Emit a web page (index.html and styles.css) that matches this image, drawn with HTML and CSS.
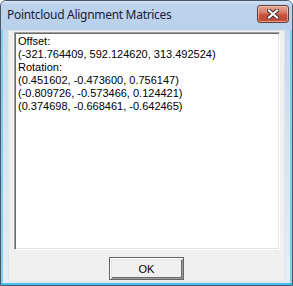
FILE: index.html
```html
<!DOCTYPE html>
<html>
<head>
<meta charset="utf-8">
<link rel="stylesheet" href="styles.css">
</head>
<body>
<div class="window">
  <div class="titlebar">
    <span class="title">Pointcloud Alignment Matrices</span>
    <div class="close">
      <svg width="12" height="10" viewBox="0 0 12 10">
        <path d="M2 1.5 L10 8.5 M10 1.5 L2 8.5" stroke="#3d2a2a" stroke-width="4" stroke-linecap="square" fill="none"/>
        <path d="M2 1.5 L10 8.5 M10 1.5 L2 8.5" stroke="#ffffff" stroke-width="2.2" stroke-linecap="square" fill="none"/>
      </svg>
    </div>
  </div>
  <div class="client">
    <div class="edit">
      <div class="line">Offset:</div>
      <div class="line">(-321.764409, 592.124620, 313.492524)</div>
      <div class="line">Rotation:</div>
      <div class="line">(0.451602, -0.473600, 0.756147)</div>
      <div class="line">(-0.809726, -0.573466, 0.124421)</div>
      <div class="line">(0.374698, -0.668461, -0.642465)</div>
    </div>
    <div class="actions">
      <button class="ok">OK</button>
    </div>
  </div>
</div>
</body>
</html>
```

FILE: styles.css
```css
html, body {
  margin: 0;
  padding: 0;
  background: #ffffff;
}
.window {
  box-sizing: border-box;
  width: 293px;
  height: 286px;
  border: 1px solid #4a5868;
  border-radius: 6px 6px 0 0;
  padding: 0 7px 3px 7px;
  background: linear-gradient(to bottom, #bcd3ec 0px, #c4d8ef 30px, #d6e3f2 140px, #e6edf6 286px);
  box-shadow: inset 0 -2px 0 0 #44c2ee, inset 2px 0 0 0 #7fd0f0, inset -2px 0 0 0 #7fd0f0;
  display: flex;
  flex-direction: column;
}
.titlebar {
  height: 29px;
  margin: 0 -7px;
  padding: 0 3px 0 6px;
  display: flex;
  align-items: flex-start;
  justify-content: space-between;
  background: linear-gradient(to bottom, #d2e2f4 0px, #bdd3ec 4px, #bad1eb 29px);
  border-radius: 5px 5px 0 0;
}
.title {
  font-family: "Noto Sans", "Open Sans", sans-serif;
  font-size: 12px;
  letter-spacing: -0.3px;
  color: #1a1a3a;
  margin-top: 6px;
  line-height: 16px;
}
.close {
  margin-top: 4px;
  box-sizing: border-box;
  width: 32px;
  height: 18px;
  border: 1px solid #6a3a35;
  border-radius: 3px;
  background: linear-gradient(to bottom, #e4a193 0px, #d9806e 6px, #c7503c 9px, #c14a36 14px, #d0705a 18px);
  box-shadow: inset 0 0 0 1px rgba(255, 220, 210, 0.5);
  display: flex;
  align-items: center;
  justify-content: center;
}
.close svg {
  display: block;
}
.client {
  flex: 1;
  background: #f0f0f0;
  box-shadow: inset 0 0 0 1px #dfe4ea;
  display: flex;
  flex-direction: column;
  padding: 2px 5px 0 6px;
}
.edit {
  box-sizing: border-box;
  height: 218px;
  background: #ffffff;
  border-top: 1px solid #a0a0a0;
  border-left: 1px solid #a0a0a0;
  border-right: 1px solid #ffffff;
  border-bottom: 1px solid #ffffff;
  box-shadow: inset 1px 1px 0 0 #696969, inset -1px -1px 0 0 #e3e3e3;
  padding: 2px 3px;
  font-family: "Liberation Sans", Arial, sans-serif;
  font-size: 11px;
  line-height: 13px;
  color: #000000;
}
.actions {
  display: flex;
  justify-content: center;
  padding-top: 7px;
  padding-right: 1px;
}
.ok {
  box-sizing: border-box;
  width: 75px;
  height: 23px;
  margin: 0;
  padding: 0;
  border: 1px solid #646464;
  background: #f0f0f0;
  box-shadow: inset 1px 1px 0 0 #ffffff, inset -1px -1px 0 0 #a0a0a0, inset 2px 2px 0 0 #e3e3e3, inset -2px -2px 0 0 #696969;
  font-family: "Liberation Sans", Arial, sans-serif;
  font-size: 11px;
  color: #000000;
}
```
